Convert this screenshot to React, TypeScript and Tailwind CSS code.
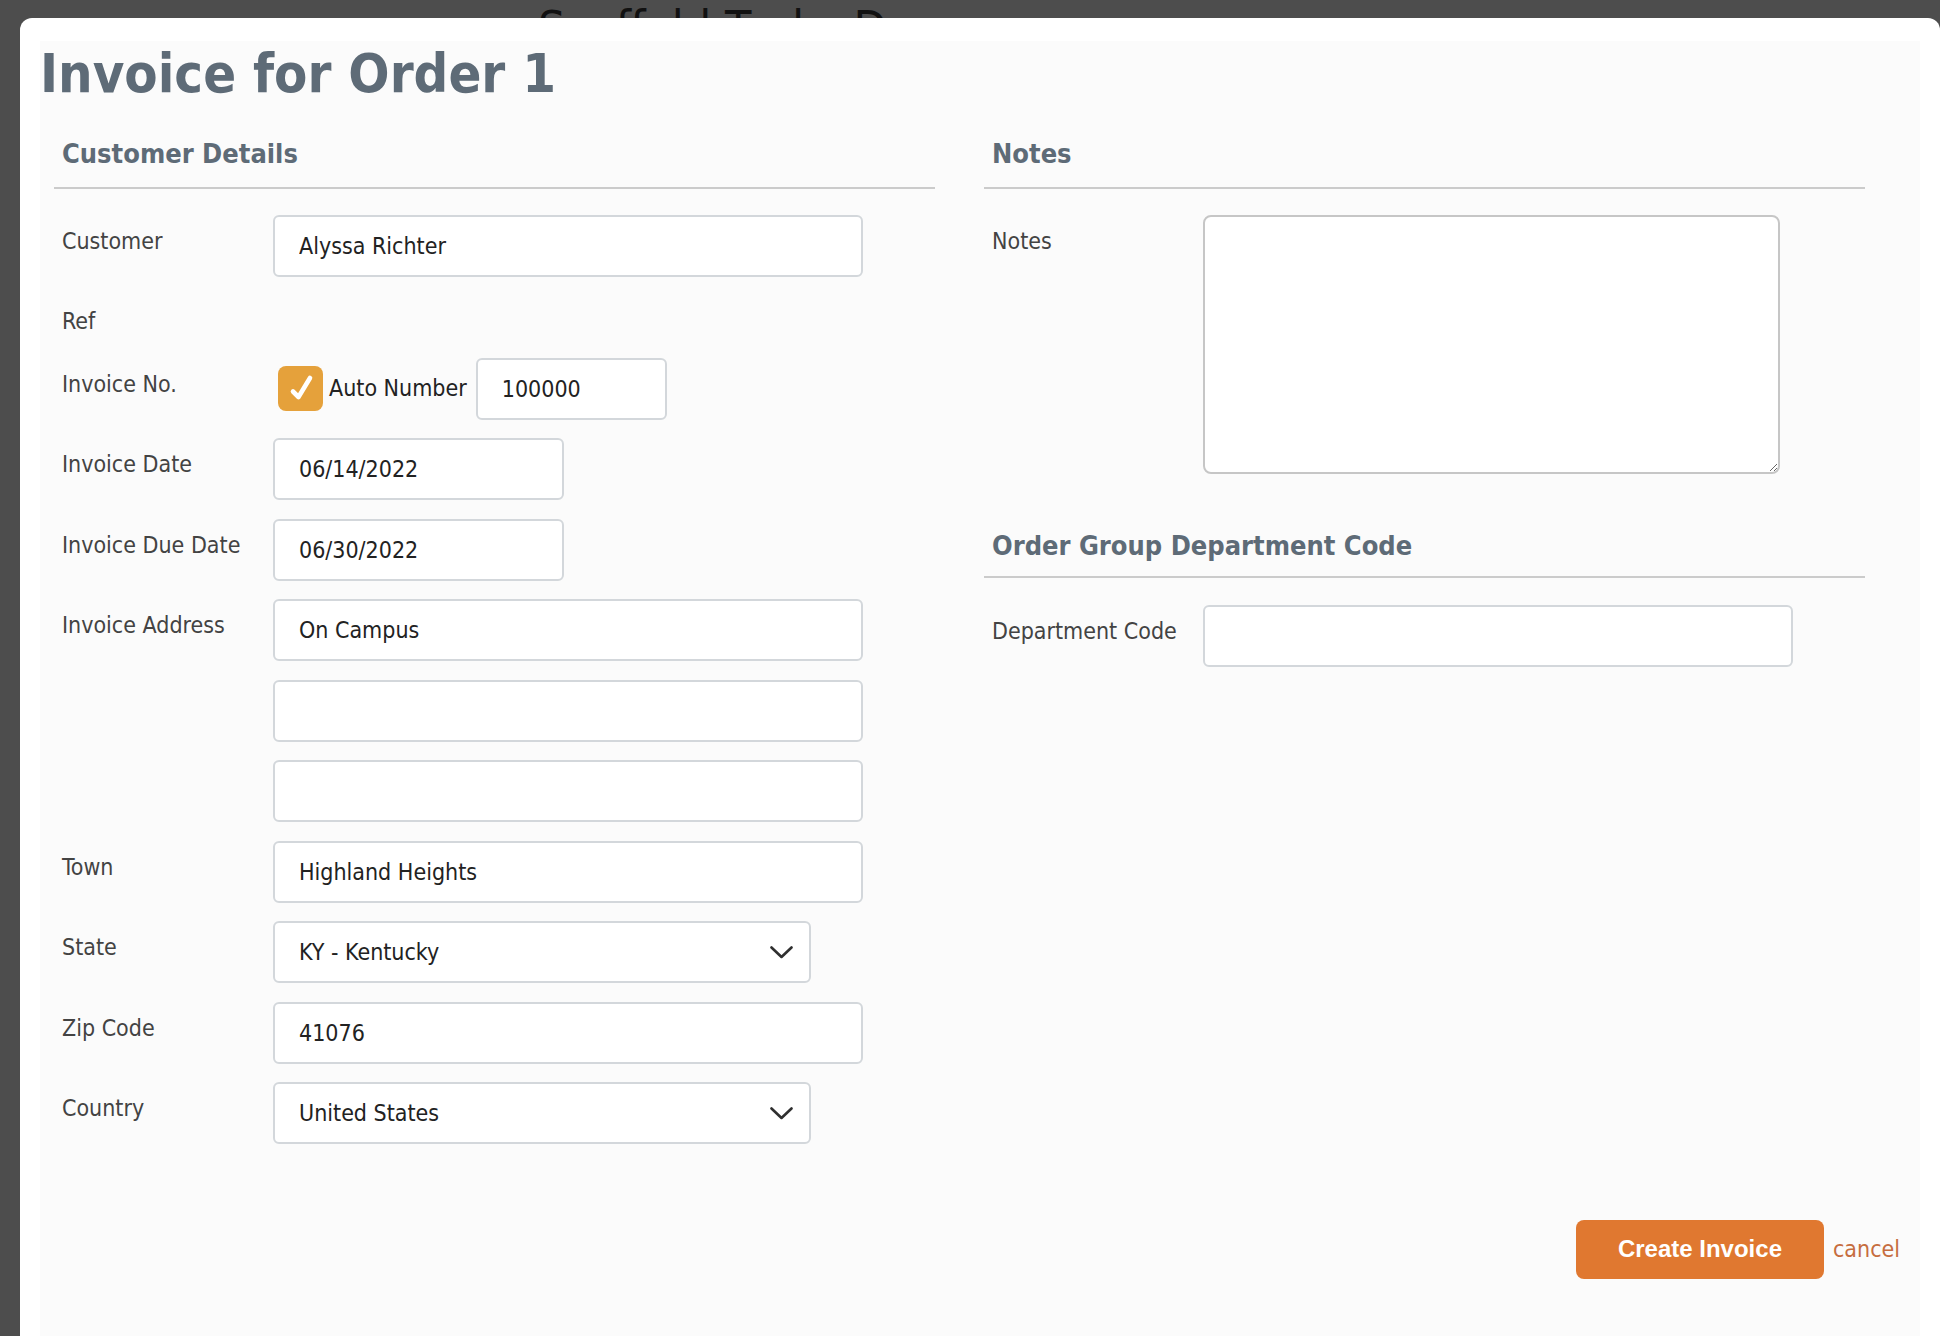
import React from "react";

const FONT = "font-['DejaVu_Sans_Condensed','DejaVu_Sans',sans-serif] font-stretch-condensed";

function Label({ children }: { children?: React.ReactNode }) {
  return (
    <div className="w-[211px] shrink-0 pt-[12px] text-[23px] leading-[28px] text-[#434343]">{children}</div>
  );
}

function TextInput({ value, width }: { value: string; width: string }) {
  return (
    <input
      readOnly
      value={value}
      className={`${width} h-[62px] rounded-[6px] border-2 border-[#d3d7db] bg-white pl-[24px] text-[23px] text-[#222] outline-none ${FONT}`}
    />
  );
}

function SelectBox({ value }: { value: string }) {
  return (
    <div className="relative w-[538px] h-[62px]">
      <select
        value={value}
        onChange={() => {}}
        className={`w-full h-full appearance-none rounded-[6px] border-2 border-[#d3d7db] bg-white pl-[24px] text-[23px] text-[#222] outline-none ${FONT}`}
      >
        <option>{value}</option>
      </select>
      <svg
        className="pointer-events-none absolute right-[18px] top-[25px]"
        width="23"
        height="13"
        viewBox="0 0 23 13"
        fill="none"
      >
        <polyline points="1.5,1.5 11.5,11 21.5,1.5" stroke="#2f2f2f" strokeWidth="2.6" strokeLinecap="round" strokeLinejoin="round" />
      </svg>
    </div>
  );
}

function Header({ children, pb }: { children: React.ReactNode; pb: string }) {
  return (
    <div className={`pl-[8px] ${pb} border-b-2 border-[#cbcbcb] text-[27px] leading-[32px] font-bold text-[#5e6b77] whitespace-nowrap`}>
      {children}
    </div>
  );
}

function Row({ label, children }: { label?: string; children?: React.ReactNode }) {
  return (
    <div className="flex items-start">
      <Label>{label}</Label>
      {children}
    </div>
  );
}

export default function App() {
  return (
    <div className={`relative h-[1336px] w-full overflow-hidden bg-[#4d4d4d] ${FONT}`}>
      <div className="pl-[538px] text-[48px] leading-[56px] font-medium text-[#111] whitespace-nowrap">Scaffold Tasks Demo</div>

      <div className="absolute left-[20px] top-[18px] right-0 bottom-0 rounded-t-[12px] bg-white px-[20px] pt-[20px]">
        <div className="h-full bg-[#fbfbfb]">
          <h1 className="mt-[3px] text-[54px] leading-[66px] font-bold text-[#5e6b77] whitespace-nowrap">Invoice for Order 1</h1>

          <div className="mt-[30.5px] ml-[14px] flex gap-[49px]">
            {/* Left column */}
            <div className="w-[881px]">
              <Header pb="pb-[17px]">Customer Details</Header>
              <div className="mt-[26px] flex flex-col gap-[18.5px] pl-[8px]">
                <Row label="Customer">
                  <TextInput value="Alyssa Richter" width="w-[590px]" />
                </Row>
                <div className="h-[44px]">
                  <Row label="Ref" />
                </div>
                <Row label="Invoice No.">
                  <div className="flex items-center h-[62px]">
                    <div className="ml-[5px] flex h-[45px] w-[45px] items-center justify-center rounded-[8px] bg-[#e5a13b]">
                      <svg width="45" height="45" viewBox="0 0 45 45" fill="none">
                        <path d="M15 25.5 L20.5 31 L32 12" stroke="white" strokeWidth="4.6" strokeLinecap="round" strokeLinejoin="round" />
                      </svg>
                    </div>
                    <span className="ml-[6px] mr-[9px] text-[23px] text-[#222]">Auto Number</span>
                    <TextInput value="100000" width="w-[191px]" />
                  </div>
                </Row>
                <Row label="Invoice Date">
                  <TextInput value="06/14/2022" width="w-[291px]" />
                </Row>
                <Row label="Invoice Due Date">
                  <TextInput value="06/30/2022" width="w-[291px]" />
                </Row>
                <Row label="Invoice Address">
                  <TextInput value="On Campus" width="w-[590px]" />
                </Row>
                <Row>
                  <TextInput value="" width="w-[590px]" />
                </Row>
                <Row>
                  <TextInput value="" width="w-[590px]" />
                </Row>
                <Row label="Town">
                  <TextInput value="Highland Heights" width="w-[590px]" />
                </Row>
                <Row label="State">
                  <SelectBox value="KY - Kentucky" />
                </Row>
                <Row label="Zip Code">
                  <TextInput value="41076" width="w-[590px]" />
                </Row>
                <Row label="Country">
                  <SelectBox value="United States" />
                </Row>
              </div>
            </div>

            {/* Right column */}
            <div className="w-[881px]">
              <Header pb="pb-[17px]">Notes</Header>
              <div className="mt-[26px] pl-[8px]">
                <Row label="Notes">
                  <textarea
                    readOnly
                    className="h-[259px] w-[577px] rounded-[8px] border-2 border-[#c6c6c6] bg-white outline-none resize"
                  />
                </Row>
              </div>
              <div className="mt-[56.5px]">
                <Header pb="pb-[14px]">Order Group Department Code</Header>
              </div>
              <div className="mt-[27px] pl-[8px]">
                <Row label="Department Code">
                  <TextInput value="" width="w-[590px]" />
                </Row>
              </div>
            </div>
          </div>

          <div className="mt-[75.5px] flex items-center justify-end gap-[9px] pr-[20px]">
            <button className="h-[59px] w-[248px] rounded-[8px] bg-[#e07830] font-['Liberation_Sans',Arial,sans-serif] text-[24px] font-bold text-white">
              Create Invoice
            </button>
            <span className="text-[23px] text-[#c66d3f]">cancel</span>
          </div>
        </div>
      </div>
    </div>
  );
}
